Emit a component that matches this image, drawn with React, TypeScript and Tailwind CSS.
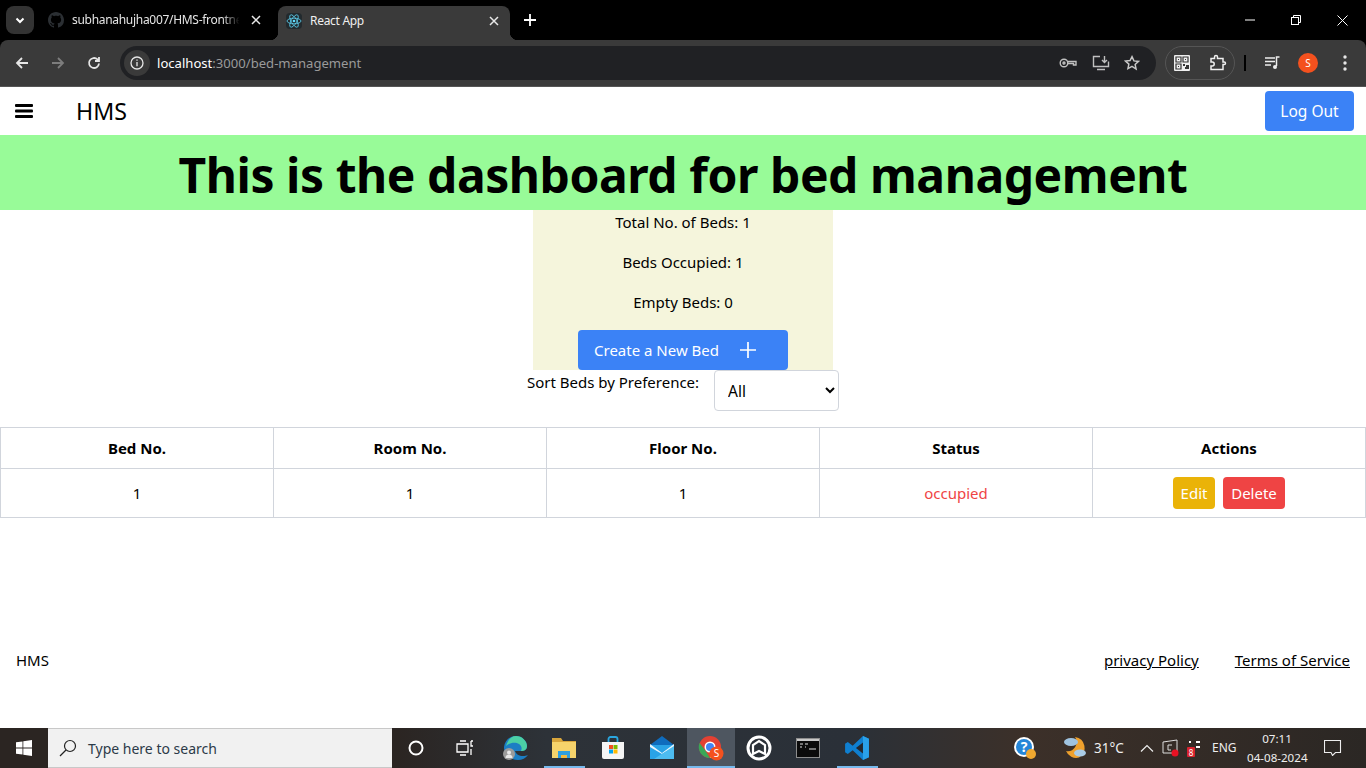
import React from "react";

function TabStrip() {
  return (
    <div className="h-10 bg-black flex items-start text-white text-xs shrink-0 font-['Noto_Sans','Open_Sans',sans-serif]">
      <div className="ml-[6px] mt-[6px] w-[28px] h-[28px] rounded-lg bg-[#333333] flex items-center justify-center">
        <svg width="12" height="12" viewBox="0 0 12 12" fill="none" stroke="#fff" strokeWidth="2"><path d="M2.5 4.5 6 8l3.5-3.5" /></svg>
      </div>
      <div className="ml-[14px] mt-[6px] w-[213px] h-[28px] flex items-center">
        <svg width="16" height="16" viewBox="0 0 16 16" fill="#2b2f33" className="shrink-0"><path d="M8 0C3.58 0 0 3.58 0 8c0 3.54 2.29 6.53 5.47 7.59.4.07.55-.17.55-.38 0-.19-.01-.82-.01-1.49-2.01.37-2.53-.49-2.69-.94-.09-.23-.48-.94-.82-1.13-.28-.15-.68-.52-.01-.53.63-.01 1.08.58 1.23.82.72 1.21 1.87.87 2.33.66.07-.52.28-.87.51-1.07-1.78-.2-3.64-.89-3.64-3.95 0-.87.31-1.59.82-2.15-.08-.2-.36-1.02.08-2.12 0 0 .67-.21 2.2.82.64-.18 1.32-.27 2-.27s1.36.09 2 .27c1.53-1.04 2.2-.82 2.2-.82.44 1.1.16 1.92.08 2.12.51.56.82 1.27.82 2.15 0 3.07-1.87 3.75-3.65 3.95.29.25.54.73.54 1.48 0 1.07-.01 1.93-.01 2.2 0 .21.15.46.55.38A8.01 8.01 0 0 0 16 8c0-4.42-3.58-8-8-8z" /></svg>
        <span className="ml-[8px] w-[171px] whitespace-nowrap text-[#e4e4e4] text-[12px] tracking-[-0.3px] [mask-image:linear-gradient(to_right,black_88%,transparent_98%)]">subhanahujha007/HMS-frontne</span>
        <svg width="10" height="10" viewBox="0 0 10 10" stroke="#e8e8e8" strokeWidth="1.5" className="ml-[8px] shrink-0"><path d="M1 1l8 8M9 1l-8 8" /></svg>
      </div>
      <div className="relative ml-[17px] mt-[6px] w-[232px] h-[34px] bg-[#3a3a3a] rounded-t-lg flex items-center pb-[4px]">
        <div className="absolute bottom-0 -left-2 w-2 h-2 bg-[radial-gradient(circle_at_0_0,transparent_8px,#3a3a3a_8.5px)]" />
        <div className="absolute bottom-0 -right-2 w-2 h-2 bg-[radial-gradient(circle_at_100%_0,transparent_8px,#3a3a3a_8.5px)]" />
        <div className="ml-[8px] w-[16px] h-[16px] bg-[#222a2e] rounded-sm flex items-center justify-center shrink-0">
          <svg width="16" height="16" viewBox="-12 -12 24 24" fill="none" stroke="#61dafb" strokeWidth="1.1">
            <circle r="2" fill="#61dafb" stroke="none" />
            <ellipse rx="10.5" ry="4.2" />
            <ellipse rx="10.5" ry="4.2" transform="rotate(60)" />
            <ellipse rx="10.5" ry="4.2" transform="rotate(120)" />
          </svg>
        </div>
        <span className="ml-[8px] flex-1 text-[12px] tracking-[-0.3px] text-[#f0f0f0]">React App</span>
        <svg width="10" height="10" viewBox="0 0 10 10" stroke="#e8e8e8" strokeWidth="1.5" className="mr-[11px] shrink-0"><path d="M1 1l8 8M9 1l-8 8" /></svg>
      </div>
      <svg width="12" height="12" viewBox="0 0 12 12" stroke="#fff" strokeWidth="1.8" className="ml-[14px] mt-[14px]"><path d="M6 0v12M0 6h12" /></svg>
      <div className="flex-1" />
      <div className="flex items-center h-10">
        <svg width="10" height="2" className="mr-[36px]"><path d="M0 1h10" stroke="#fff" strokeWidth="1" /></svg>
        <svg width="10" height="10" viewBox="0 0 10 10" fill="none" stroke="#fff" strokeWidth="1" className="mr-[36px]"><rect x="0.5" y="2.5" width="7" height="7" /><path d="M2.5 2.5v-2h7v7h-2" /></svg>
        <svg width="11" height="11" viewBox="0 0 11 11" stroke="#fff" strokeWidth="1" className="mr-[18px]"><path d="M.5.5l10 10M10.5.5l-10 10" /></svg>
      </div>
    </div>
  );
}

function Toolbar() {
  return (
    <div className="bg-black shrink-0">
      <div className="h-[46px] bg-[#3a3a3a] rounded-t-lg flex items-center border-b border-[#555555] box-content font-['Noto_Sans','Open_Sans',sans-serif]">
        <svg width="16" height="16" viewBox="0 0 16 16" fill="none" stroke="#e6e6e6" strokeWidth="1.8" className="ml-[14px]"><path d="M14 8H3M8 3 3 8l5 5" /></svg>
        <svg width="16" height="16" viewBox="0 0 16 16" fill="none" stroke="#7d7d7d" strokeWidth="1.8" className="ml-[20px]"><path d="M2 8h11M8 3l5 5-5 5" /></svg>
        <svg width="16" height="16" viewBox="0 0 16 16" fill="none" stroke="#e6e6e6" strokeWidth="1.8" className="ml-[20px]"><path d="M13 8.5A5 5 0 1 1 11.500 4.400L13 6M13 2v4H9" /></svg>
        <div className="ml-[18px] w-[1036px] h-[34px] rounded-full bg-[#202124] flex items-center text-[13.1px]">
          <div className="ml-[4px] w-[26px] h-[26px] rounded-full bg-[#3a3a3a] flex items-center justify-center">
            <svg width="14" height="14" viewBox="0 0 14 14" fill="none" stroke="#e6e6e6" strokeWidth="1.3"><circle cx="7" cy="7" r="6" /><path d="M7 6v4.2M7 3.4v1.3" /></svg>
          </div>
          <span className="ml-[7px] pt-px text-white">localhost</span>
          <span className="pt-px text-[#9a9a9a]">:3000/bed-management</span>
          <div className="flex-1" />
          <svg width="18" height="12" viewBox="0 0 18 12" fill="none" stroke="#c0c0c0" strokeWidth="1.4" className="mr-[15px]"><circle cx="5" cy="6" r="3.8" /><circle cx="5" cy="6" r="1" /><path d="M9 4.500h8v3.500h-2.500v-1.500H9" /></svg>
          <svg width="18" height="16" viewBox="0 0 18 16" fill="none" stroke="#c0c0c0" strokeWidth="1.4" className="mr-[14px]"><path d="M8 1.500H1.500v10h15v-5M5 14.500h8M12.500 1v6M10 5l2.500 2.500L15 5" /></svg>
          <svg width="16" height="16" viewBox="0 0 24 24" fill="none" stroke="#c8c8c8" strokeWidth="2.2" className="mr-[16px]"><path d="M12 2.500l2.900 6.300 6.900.8-5.100 4.600 1.400 6.800L12 17.100 5.900 20.500l1.400-6.800-5.100-4.600 6.900-.8z" /></svg>
        </div>
        <div className="ml-[9px] w-[70px] h-[34px] rounded-full border border-[#555555] flex items-center">
          <svg width="16" height="16" viewBox="0 0 16 16" className="ml-[8px]">
            <rect width="16" height="16" rx="1" fill="#efefef" />
            <path d="M2 2h5v5H2zM9 2h5v5H9zM2 9h5v5H2z" fill="none" stroke="#333" strokeWidth="1.2" />
            <path d="M4 4h1v1H4zM11 4h1v1h-1zM4 11h1v1H4z" fill="#333" />
            <path d="M9 9h2v2H9zM12 10h3v4h-4v-2h1z" fill="#333" />
          </svg>
          <svg width="18" height="18" viewBox="0 0 18 18" fill="none" stroke="#f0f0f0" strokeWidth="1.5" className="ml-[19px]"><path d="M2 4.500h3.500V3a1.500 1.500 0 0 1 3 0v1.500H14v3.500h1.200a1.300 1.300 0 0 1 0 2.600H14V15.500H2v-3.500h1.200a2 2 0 0 0 0-4H2z" /></svg>
        </div>
        <div className="ml-[9px] w-[2px] h-[16px] bg-black" />
        <svg width="16" height="14" viewBox="0 0 16 14" fill="none" stroke="#ededed" strokeWidth="1.5" className="ml-[19px]"><path d="M0 2h10M0 5.500h10M0 9h6M14.500 1h-3v9" /><circle cx="10" cy="11" r="2" fill="#ededed" stroke="none" /></svg>
        <div className="ml-[17px] w-5 h-5 rounded-full bg-[#f4511e] text-white text-[10px] flex items-center justify-center">S</div>
        <svg width="4" height="16" viewBox="0 0 4 16" fill="#e6e6e6" className="ml-[25px]"><circle cx="2" cy="2" r="1.7" /><circle cx="2" cy="8" r="1.7" /><circle cx="2" cy="14" r="1.7" /></svg>
      </div>
    </div>
  );
}

function Page() {
  return (
    <div className="flex-1 flex flex-col bg-white text-black font-['Noto_Sans','Open_Sans',sans-serif] text-[15px] min-h-0 overflow-hidden">
      <nav className="h-[48px] flex items-center justify-between shrink-0">
        <div className="flex items-center">
          <svg width="18" height="16" viewBox="0 0 18 16" fill="#000" className="ml-[15px]"><rect y="1" width="18" height="3" rx="1" /><rect y="6.500" width="18" height="3" rx="1" /><rect y="12" width="18" height="3" rx="1" /></svg>
          <span className="ml-[43px] pt-[2px] text-[23.2px] leading-none">HMS</span>
        </div>
        <button className="mr-3 h-10 w-[89px] pt-px bg-[#3b82f6] text-white rounded text-[15.5px]">Log Out</button>
      </nav>
      <h1 className="h-[75px] shrink-0 bg-[#98fb98] text-center text-[48px] tracking-[-0.45px] leading-[80px] font-bold">This is the dashboard for bed management</h1>
      <div className="w-[300px] h-40 mx-auto bg-[#f5f5dc] text-center shrink-0">
        <p className="leading-6 mb-4">Total No. of Beds: 1</p>
        <p className="leading-6 mb-4">Beds Occupied: 1</p>
        <p className="leading-6 mb-4">Empty Beds: 0</p>
        <button className="h-10 w-[210px] bg-[#3b82f6] text-white rounded pl-4 flex items-center mx-auto">
          Create a New Bed
          <svg width="16" height="16" viewBox="0 0 16 16" stroke="#fff" strokeWidth="1.7" className="ml-[21px]"><path d="M8 0v16M0 8h16" /></svg>
        </button>
      </div>
      <div className="flex justify-center items-start shrink-0">
        <label className="leading-6">Sort Beds by Preference:</label>
        <select className="ml-[15px] w-[125px] h-[41px] border border-gray-300 rounded pl-[9px] bg-white text-[15.5px]">
          <option>All</option>
        </select>
      </div>
      <table className="mt-4 w-full table-fixed border-collapse shrink-0">
        <thead>
          <tr className="h-[41px]">
            {["Bed No.", "Room No.", "Floor No.", "Status", "Actions"].map((h) => (
              <th key={h} className="border border-gray-300 font-bold">{h}</th>
            ))}
          </tr>
        </thead>
        <tbody>
          <tr className="h-[49px] text-center">
            <td className="border border-gray-300">1</td>
            <td className="border border-gray-300">1</td>
            <td className="border border-gray-300">1</td>
            <td className="border border-gray-300 text-[#ef4444]">occupied</td>
            <td className="border border-gray-300">
              <button className="h-8 w-[42px] bg-[#eab308] text-white rounded">Edit</button>
              <button className="ml-2 h-8 w-[62px] bg-[#ef4444] text-white rounded">Delete</button>
            </td>
          </tr>
        </tbody>
      </table>
      <footer className="mt-[130px] px-4 flex justify-between leading-6 shrink-0">
        <span>HMS</span>
        <div className="flex gap-9">
          <a className="underline">privacy Policy</a>
          <a className="underline">Terms of Service</a>
        </div>
      </footer>
    </div>
  );
}

function Slot({ w = 49, children, active, bar, full }: { w?: number; children: React.ReactNode; active?: boolean; bar?: boolean; full?: boolean }) {
  return (
    <div style={{ width: w }} className={`relative h-10 flex items-center justify-center shrink-0 ${active ? "bg-[#4e5660]" : ""}`}>
      {children}
      {bar && <div className={`absolute bottom-0 h-[2px] bg-[#76b9ed] ${full ? "left-0 right-0" : "left-1 right-1"}`} />}
    </div>
  );
}

function Taskbar() {
  return (
    <div className="h-10 shrink-0 flex items-center text-white font-['Noto_Sans','Open_Sans',sans-serif] bg-[linear-gradient(90deg,#2b2522_0%,#2b2522_29%,#2d3238_40%,#2a3038_62%,#3c3029_75%,#2b2724_100%)]">
      <div className="w-12 h-10 flex items-center justify-center shrink-0">
        <svg width="16" height="16" viewBox="0 0 16 16" fill="#fff"><path d="M0 2.300 6.500 1.400v6.200H0zM7.300 1.300 16 0v7.600H7.300zM0 8.400h6.500v6.200L0 13.700zM7.300 8.400H16V16l-8.700-1.200z" /></svg>
      </div>
      <div className="w-[344px] h-10 bg-[#f1f1f1] border-y border-[#c8c8c8] flex items-center shrink-0">
        <svg width="18" height="18" viewBox="0 0 18 18" fill="none" stroke="#222" strokeWidth="1.2" className="ml-[11px]"><circle cx="11" cy="7" r="5.500" /><path d="M7 11l-6 6" /></svg>
        <span className="ml-[11px] text-[14px] text-[#2c3a48]">Type here to search</span>
      </div>
      <div className="w-[48px] flex justify-center"><svg width="18" height="18" viewBox="0 0 18 18" fill="none" stroke="#fff" strokeWidth="2"><circle cx="9" cy="9" r="6.500" /></svg></div>
      <div className="w-[49px] flex justify-center"><svg width="18" height="16" viewBox="0 0 18 16" fill="none" stroke="#fff" strokeWidth="1.3"><path d="M1 4h11v8H1zM4 1h6M4 15h6M15 1v5h2M15 9v6M15 1h2" /></svg></div>
      <div className="w-[1.500px] shrink-0" />
      <Slot w={49}>
        <svg width="26" height="26" viewBox="0 0 26 26">
          <path d="M2 12C3 5 8 1 14 1c6 0 11 5 11 10 0 4-3 5-6 5h-6c1 3 4 5 8 5 2 0 3-.3 5-1-2 3-6 5-10 5C8 25 2 20 2 12z" fill="#1c7ec4" />
          <path d="M14 1c6 0 11 5 11 10 0 4-3 5-6 5 1-2 1-5-2-7-3-2-9-2-13 2C6 5 9 1 14 1z" fill="#4bd0a5" />
          <circle cx="7" cy="19" r="6" fill="#9b9b9b" />
          <circle cx="7" cy="17.500" r="2" fill="#e8e8e8" />
          <path d="M3.500 23a3.500 3.500 0 0 1 7 0z" fill="#e8e8e8" />
        </svg>
      </Slot>
      <Slot w={49} bar>
        <svg width="24" height="22" viewBox="0 0 24 22">
          <path d="M0 1h9l2 3h13v17H0z" fill="#d9a63c" />
          <path d="M0 5h24v16H0z" fill="#f6d36b" />
          <path d="M6 21v-7h12v7h-3v-3H9v3z" fill="#2f9fe0" />
          <path d="M9 18h6v3H9z" fill="#f3b93f" />
        </svg>
      </Slot>
      <Slot w={49}>
        <svg width="24" height="24" viewBox="0 0 24 24">
          <path d="M7.500 6V3a2 2 0 0 1 2-2h5a2 2 0 0 1 2 2v3" fill="none" stroke="#2aa7e0" strokeWidth="1.8" />
          <path d="M1 6h22v15a2 2 0 0 1-2 2H3a2 2 0 0 1-2-2z" fill="#f5f5f5" />
          <rect x="8" y="9" width="4" height="4" fill="#f25022" /><rect x="12.500" y="9" width="4" height="4" fill="#7fba00" />
          <rect x="8" y="13.500" width="4" height="4" fill="#00a4ef" /><rect x="12.500" y="13.500" width="4" height="4" fill="#ffb900" />
        </svg>
      </Slot>
      <Slot w={49}>
        <svg width="24" height="24" viewBox="0 0 24 24">
          <path d="M0 9 12 0l12 9v14H0z" fill="#0f6cbd" />
          <path d="M0 9h24v14H0z" fill="#2aa3e6" />
          <path d="M0 8l12 9 12-9v3l-12 7L0 11z" fill="#e8f5fd" />
          <path d="M24 10v13H4z" fill="#4dbcf0" />
        </svg>
      </Slot>
      <Slot w={48} active bar full>
        <svg width="26" height="26" viewBox="0 0 26 26">
          <circle cx="12" cy="12" r="11" fill="#e34133" />
          <path d="M23 12a11 11 0 0 1-11 11L17 14h6z" fill="#f9c12e" />
          <path d="M1.500 8 7 15l5 8A11 11 0 0 1 1.500 8z" fill="#3aa757" />
          <circle cx="12" cy="12" r="5.500" fill="#fff" />
          <circle cx="12" cy="12" r="4" fill="#4285f4" />
          <circle cx="18.500" cy="18.500" r="7" fill="#f4511e" />
          <text x="18.500" y="22" fontSize="10" fill="#fff" textAnchor="middle" fontFamily="Noto Sans, sans-serif">S</text>
        </svg>
      </Slot>
      <Slot w={49}>
        <svg width="26" height="26" viewBox="0 0 26 26" fill="none">
          <circle cx="13" cy="13" r="11" stroke="#fff" strokeWidth="3" />
          <path d="M7 19v-9l6-4 6 4v9l-6-3z" stroke="#fff" strokeWidth="2.2" />
        </svg>
      </Slot>
      <Slot w={49}>
        <svg width="24" height="20" viewBox="0 0 24 20">
          <rect x=".5" y=".5" width="23" height="19" fill="#0b0b0b" stroke="#8d8d8d" />
          <rect x="1" y="1" width="22" height="2" fill="#c9c9c9" />
          <path d="M4 6h3M4 9h2M9 6h3M9 9h1M13 11h7" stroke="#e0e0e0" strokeWidth="1.2" />
        </svg>
      </Slot>
      <Slot w={49} bar>
        <svg width="26" height="26" viewBox="0 0 24 24">
          <path d="M17.500 1 8 10 3.500 6.500 1 8v8l2.500 1.500L8 14l9.500 9 5.500-2.500v-17z" fill="#0f7fd0" />
          <path d="M17.500 1 23 3.500v17L17.500 23z" fill="#2aa1ea" />
          <path d="M17.500 7 11 12l6.500 5z" fill="#23272e" />
        </svg>
      </Slot>
      <div className="flex-1" />
      <div className="flex items-center h-10 text-[13.5px] text-[#efefef]">
        <svg width="24" height="24" viewBox="0 0 24 24">
          <circle cx="11" cy="11" r="10" fill="#fff" />
          <circle cx="11" cy="11" r="8" fill="#2586d8" />
          <text x="11" y="16" fontSize="14" fontWeight="700" fill="#fff" textAnchor="middle" fontFamily="Noto Sans, sans-serif">?</text>
          <circle cx="18" cy="18" r="5" fill="#f0a830" />
        </svg>
        <svg width="24" height="24" viewBox="0 0 24 24" className="ml-[26px]">
          <path d="M12 1a11 11 0 0 1 4 20.500A11 11 0 0 1 3 15a9 9 0 0 0 9-14z" fill="#eea02d" />
          <ellipse cx="8" cy="6" rx="7" ry="4" fill="#9fc3e0" />
          <ellipse cx="17" cy="17" rx="6" ry="3.500" fill="#a9cbe6" />
        </svg>
        <span className="ml-[7px] w-[29px] whitespace-nowrap">31°C</span>
        <svg width="14" height="8" viewBox="0 0 14 8" fill="none" stroke="#eee" strokeWidth="1.2" className="ml-[17px]"><path d="M1 7.500 7 1.500l6 6" /></svg>
        <svg width="18" height="18" viewBox="0 0 18 18" className="ml-[8px]" fill="none" stroke="#ddd"><path d="M1 3l14-2v13H1z" /><path d="M10 6H6v5h3" /><circle cx="13" cy="14" r="3.500" fill="#e81123" stroke="none" /></svg>
        <svg width="16" height="18" viewBox="0 0 16 18" className="ml-[6px]"><rect x="1" y="8" width="8" height="10" rx="1" fill="#d9232e" /><text x="5" y="16.500" fontSize="8" fill="#fff" textAnchor="middle" fontFamily="Noto Sans, sans-serif">8</text><path d="M3 3h2M10 3h4M10 8h4" stroke="#fff" strokeWidth="2" /></svg>
        <span className="ml-[10px] w-[24px] text-[12px]">ENG</span>
        <div className="ml-[11px] w-[60px] text-[11.6px] leading-[19px] text-center whitespace-nowrap">
          <div>07:11</div>
          <div>04-08-2024</div>
        </div>
        <svg width="18" height="16" viewBox="0 0 18 16" fill="none" stroke="#eee" strokeWidth="1.1" className="ml-[17px] mr-[24px]"><path d="M.5.5h16v12h-5L8.500 15.500 7 12.500H.5z" /></svg>
      </div>
    </div>
  );
}

export default function App() {
  return (
    <div className="h-[768px] w-[1366px] flex flex-col overflow-hidden">
      <TabStrip />
      <Toolbar />
      <Page />
      <Taskbar />
    </div>
  );
}
